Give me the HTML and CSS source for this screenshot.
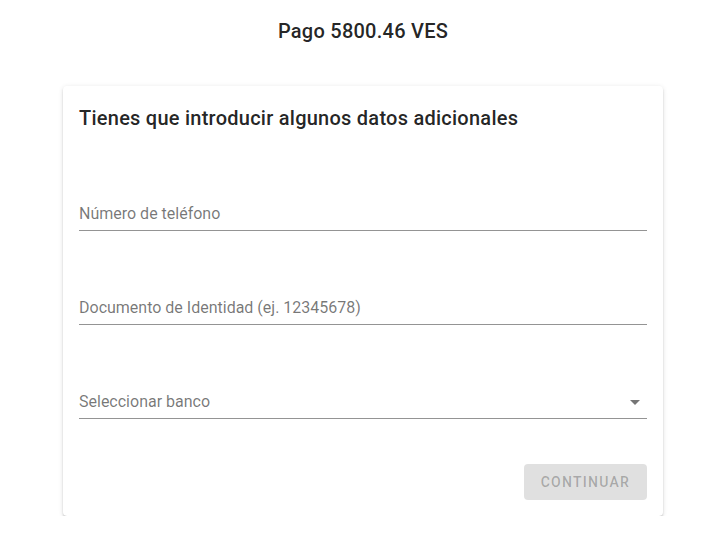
FILE: index.html
```html
<!DOCTYPE html>
<html>
<head>
  <meta charset="utf-8">
  <title>Pago</title>
<link rel="stylesheet" href="styles.css">
</head>
<body>
  <div class="main">
    <h1 class="amount">Pago 5800.46 VES</h1>
    <div class="card">
      <h2 class="card-title">Tienes que introducir algunos datos adicionales</h2>
      <div class="field first">
        <input class="field-input" type="text" placeholder="Número de teléfono">
      </div>
      <div class="field">
        <input class="field-input" type="text" placeholder="Documento de Identidad (ej. 12345678)">
      </div>
      <div class="field select">
        <div class="field-input select-value">Seleccionar banco</div>
        <svg class="select-icon" viewBox="0 0 24 24" width="24" height="24"><path d="M7 10l5 5 5-5z"></path></svg>
      </div>
      <div class="actions">
        <button class="btn" disabled>Continuar</button>
      </div>
    </div>
  </div>
</body>
</html>
```
FILE: styles.css
```css
body {
  margin: 0;
  font-family: Roboto, "Liberation Sans", sans-serif;
  background-color: #fff;
  color: rgba(0, 0, 0, 0.87);
}
.main {
  width: 600px;
  margin-left: 63px;
  padding-top: 16px;
}
.amount {
  margin: 0;
  height: 30px;
  line-height: 30px;
  font-size: 20px;
  font-weight: 500;
  letter-spacing: 0.25px;
  text-align: center;
}
.card {
  margin-top: 40px;
  padding: 16px;
  background-color: #fff;
  border-radius: 4px;
  box-shadow: 0 3px 1px -2px rgba(0, 0, 0, 0.2), 0 2px 2px 0 rgba(0, 0, 0, 0.14), 0 1px 5px 0 rgba(0, 0, 0, 0.12);
}
.card-title {
  margin: 0;
  font-size: 20px;
  font-weight: 500;
  line-height: 32px;
  letter-spacing: 0.25px;
}
.field {
  position: relative;
  margin-top: 61px;
  border-bottom: 1px solid rgba(0, 0, 0, 0.42);
}
.field.first {
  margin-top: 64px;
}
.field-input {
  display: block;
  box-sizing: border-box;
  width: 100%;
  height: 32px;
  margin: 0;
  padding: 6px 0 7px;
  border: 0;
  outline: 0;
  background: none;
  font-family: inherit;
  font-size: 16px;
  color: rgba(0, 0, 0, 0.87);
}
.field-input::placeholder {
  color: rgba(0, 0, 0, 0.54);
  opacity: 1;
}
.select-value {
  color: rgba(0, 0, 0, 0.54);
  line-height: 19px;
}
.select-icon {
  position: absolute;
  right: 0;
  top: 4px;
  fill: rgba(0, 0, 0, 0.54);
}
.actions {
  display: flex;
  justify-content: flex-end;
  margin-top: 45px;
}
.btn {
  height: 36px;
  min-width: 64px;
  padding: 0 17px;
  border: 0;
  border-radius: 4px;
  background-color: rgba(0, 0, 0, 0.12);
  color: rgba(0, 0, 0, 0.26);
  font-family: inherit;
  font-size: 14px;
  font-weight: 500;
  letter-spacing: 1.25px;
  text-transform: uppercase;
}
```
